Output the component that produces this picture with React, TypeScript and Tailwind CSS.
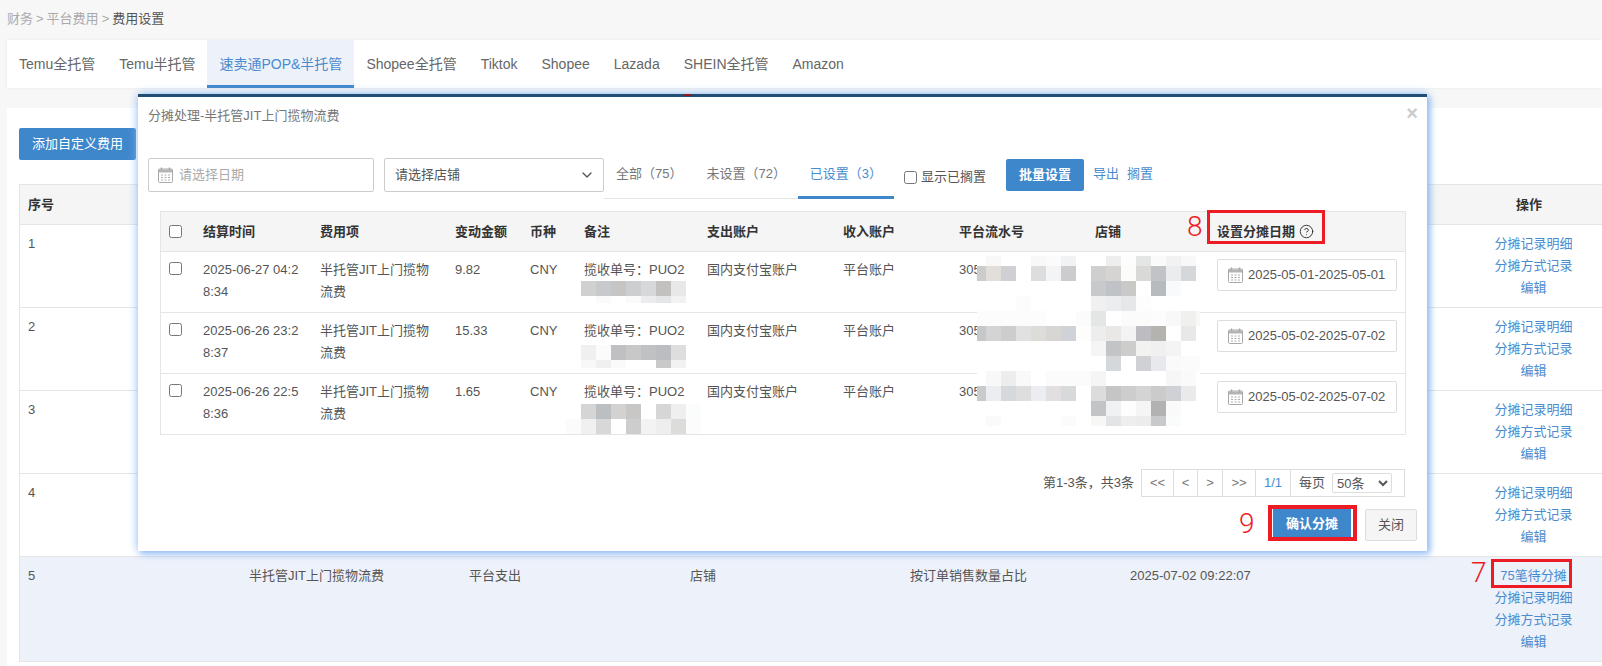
import { ChevronDown, CircleHelp } from "lucide-react";

const w = "#ffffff";
const big: string[][] = [
  [w,"#f8f8f8",w,w,"#f8f8f8","#fbfbfb","#f1f2f4",w,w,"#eeeeee","#fdfdfd","#e4e5e5","#fafafa","#f2f2f2","#f8f8f8",w],
  ["#cccccc","#e2deda","#cfd0d4",w,"#dddddd","#f3f4f6","#ccccce",w,"#cfcfcf","#d5d4d2","#fcfcfa","#d9d9d7","#c2c3c7","#ebecee","#d5d8db","#fdfdfd"],
  [w,w,w,w,w,w,w,w,"#c8c9cb","#bfc2c6","#c9cac8",w,"#b7babe","#f9fafc",w,w],
  [w,w,w,"#fcfcfc",w,w,w,w,"#f0f0f0","#ecedee","#e6e7e9","#fdfdfd",w,w,w,w],
  ["#fcfcfc","#fcfcfc","#fcfcfc","#fcfcfc","#fcfcfc",w,w,"#fbfbfb","#e4e5e5",w,"#fbfbfb","#fbfbfb","#fcfcfc","#f8f8f8","#f0f0ee","#f8f8f8"],
  ["#c6c7c8","#d4d4d4","#cdcecc","#e0e1e0","#dddcd9","#d7d6d4","#cfd2d6","#fdfdfb","#ededed","#e9e8e6","#f3f3f3","#bdbcc1","#b5b3af",w,"#e8e8e8",w],
  [w,w,w,w,w,w,w,w,"#f5f5f5","#c3c4c6","#cdcecc","#f2f2f0","#f0f0f0","#f4f4f4",w,w],
  [w,w,w,w,w,w,w,w,w,"#d5d8da",w,"#d0d1d5","#e8e9ec","#fafafa","#fbfbfb","#fbfbfb"],
  [w,"#f8f8f8","#ededed","#f9f9f9",w,"#fbfbfb","#fbfbfb","#fbfbfb","#f5f5f5",w,w,w,w,"#f6f6f6","#fafafa",w],
  ["#c9caca","#ecedf0","#d5d9db","#dedede","#ecedf0","#e2dfe0","#d8d9db",w,"#dcdcdc","#c5c5c5","#cdcdcd","#d4d4d4","#cbcbcb","#d0d1d6","#eaeaea",w],
  [w,w,w,w,w,w,w,w,"#c3c4c6","#f0f1f3","#fdfdfd","#f5f5f5","#b2b2b2","#fafafa",w,w],
  [w,"#fafafa",w,w,w,w,"#fbfbfb",w,"#f7f7f5","#e3e4e6","#eeeeee","#ececec","#c8c9cb","#fafcfb",w,w],
];
const r1 = ["#d0d0d0","#c8c9cd","#c6c5c3","#cdced0","#d7d8da","#c2c1bf","#e8e8e8", w,"#fafafa",w,"#fafafa","#ececee","#e4e6e8","#f2f2f2"];
const r2 = ["#f0f0f0","#fbfbfb","#c0c0c2","#c8c8c8","#c0c1c3","#bcbdc1","#dededf","#f8f8f8","#f0f0f0","#fafafa",w,w,"#c9c9c9","#f2f2f2"];
const r3 = [w,"#d6d5d5","#bcbfc1","#d2d2d2","#c8c7c5",w,"#d6d6d6","#efefef","#fbfdfc","#fbfbfb","#f0f0f0","#d8d8d8",w,"#cdcdcd","#f3f3f3","#eeeeee","#dcdcda","#fcfcfc"];

const Px = ({ c }: { c: string }) => <div style={{ background: c }} />;

const Calendar = () => (
  <svg width="15" height="16" viewBox="0 0 15 16" fill="none" className="shrink-0">
    <rect x="0.5" y="2" width="14" height="13.5" rx="1" stroke="#a8a8a8" />
    <rect x="1" y="2.5" width="13" height="3" fill="#b5b5b5" />
    <path d="M3.5 0.5V3.5M11.5 0.5V3.5" stroke="#a8a8a8" strokeWidth="1.4" />
    <path d="M3 8h2M6.5 8h2M10 8h2M3 10.5h2M6.5 10.5h2M10 10.5h2M3 13h2M6.5 13h2M10 13h2" stroke="#b0b0b0" />
  </svg>
);

const Links = () => (
  <>
    <div>分摊记录明细</div>
    <div>分摊方式记录</div>
    <div>编辑</div>
  </>
);

const mainCols = "grid grid-cols-[221px_220px_221px_220px_220px_343px_137px]";
const subCols = "grid grid-cols-[34px_117px_135px_75px_54px_123px_136px_116px_136px_122px_197px]";

const tabs = ["Temu全托管", "Temu半托管", "速卖通POP&半托管", "Shopee全托管", "Tiktok", "Shopee", "Lazada", "SHEIN全托管", "Amazon"];

const rows = [
  { t: "2025-06-27 04:28:34", a: "9.82", d: "2025-05-01-2025-05-01" },
  { t: "2025-06-26 23:28:37", a: "15.33", d: "2025-05-02-2025-07-02" },
  { t: "2025-06-26 22:58:36", a: "1.65", d: "2025-05-02-2025-07-02" },
];

const RedNum = ({ n, cls }: { n: string; cls: string }) => (
  <span className={`absolute font-['Roboto',sans-serif] font-light text-[28px] leading-[28px] text-[#ed1c24] ${cls}`}>{n}</span>
);

export default function App() {
  return (
    <div className="relative h-[666px] w-[1602px] overflow-hidden bg-[#f7f7f7] font-['Liberation_Sans','Noto_Sans_CJK_SC',sans-serif] text-[13px] leading-[22px] text-[#555555]">
      <div className="flex h-10 items-center gap-[3px] pb-[2px] pl-[7px] text-[#aaaaaa]">
        <span>财务</span><span>&gt;</span><span>平台费用</span><span>&gt;</span><span className="text-[#555555]">费用设置</span>
      </div>
      <div className="ml-[7px] flex h-12 bg-white text-[14px] leading-[48px] text-[#666666] shadow-[0_0_2px_#e5e5e5]">
        {tabs.map((t) => (
          <div key={t} className={t.startsWith("速") ? "bg-[#edf1f9] px-3 text-[#4a8bd0] shadow-[inset_0_-3px_0_#3f87cb]" : "px-3"}>{t}</div>
        ))}
      </div>
      <div className="ml-[7px] mt-5 h-[558px] bg-white pl-3 pt-5">
        <button className="h-8 rounded-[2px] bg-[#3f87cb] px-[13px] text-white">添加自定义费用</button>
        <div className="mt-6 border-l border-[#e5e5e5]">
          <div className={`${mainCols} h-[41px] items-center border-y border-[#e5e5e5] bg-[#f5f5f5] font-bold text-[#333333]`}>
            <div className="pl-2">序号</div>
            <div /><div /><div /><div /><div />
            <div className="pr-[9px] text-center">操作</div>
          </div>
          {["1", "2", "3", "4"].map((n) => (
            <div key={n} className={`${mainCols} border-b border-[#e5e5e5] py-2`}>
              <div className="pl-2">{n}</div>
              <div /><div /><div /><div /><div />
              <div className="text-center text-[#4a8bd0]"><Links /></div>
            </div>
          ))}
          <div className={`${mainCols} border-b border-[#e5e5e5] bg-[#edf1f9] py-2`}>
            <div className="pl-2">5</div>
            <div className="pl-2">半托管JIT上门揽物流费</div>
            <div className="pl-2">平台支出</div>
            <div className="pl-2">店铺</div>
            <div className="pl-2">按订单销售数量占比</div>
            <div className="pl-2">2025-07-02 09:22:07</div>
            <div className="relative text-center text-[#4a8bd0]">
              <div>75笔待分摊</div>
              <Links />
              <div className="absolute left-[26px] top-[-6px] h-[29px] w-[81px] border-[3px] border-[#ed1c24]" />
              <RedNum n="7" cls="left-[6px] top-[-6px]" />
            </div>
          </div>
        </div>
      </div>

      {/* Modal */}
      <div className="absolute left-[138px] top-[94px] h-[457px] w-[1289px] border-t-[3px] border-[#214d73] bg-white shadow-[0_0_9px_#8ebcf5,3px_3px_6px_rgba(110,165,240,0.6)]">
        <div className="absolute left-[546px] top-[-3px] h-[2px] w-[7px] bg-[#8b1a1a]" />
        <span className="absolute right-[9px] top-[5px] text-[20px] font-bold leading-[22px] text-[#cccccc]">×</span>
        <div className="h-[61px] pl-[10px] pt-2 text-[#777777]">分摊处理-半托管JIT上门揽物流费</div>
        <div className="flex h-[41px] pl-[10px]">
          <div className="flex h-[34px] w-[226px] items-center gap-[6px] rounded-[2px] border border-[#cccccc] pl-[9px] text-[#aaaaaa]">
            <Calendar />
            <span>请选择日期</span>
          </div>
          <div className="ml-[10px] flex h-[34px] w-[220px] items-center justify-between rounded-[2px] border border-[#cccccc] bg-white pl-[10px] pr-[8px] text-[#555555]">
            <span>请选择店铺</span>
            <ChevronDown size={16} strokeWidth={2} color="#555555" />
          </div>
          <div className="flex h-[41px] w-[290px] border-b border-[#e5e5e5] pt-[5px] text-[#777777]">
            <div className="px-3">全部（75）</div>
            <div className="px-3">未设置（72）</div>
            <div className="-mb-px h-[36px] border-b-[3px] border-[#3f87cb] px-3 text-[#4a8bd0]">已设置（3）</div>
          </div>
          <label className="ml-[10px] mt-[8px] flex h-[22px] items-center gap-1 text-[#555555]">
            <input type="checkbox" className="m-0 h-[13px] w-[13px]" />
            <span>显示已搁置</span>
          </label>
          <button className="ml-[20px] mt-px h-8 w-[78px] rounded-[2px] bg-[#3f87cb] font-bold text-white">批量设置</button>
          <div className="ml-[9px] mt-[5px] flex gap-2 text-[#4a8bd0]"><span>导出</span><span>搁置</span></div>
        </div>
        <div className="ml-[22px] mr-[21px] mt-3 border-x border-[#e5e5e5]">
          <div className={`${subCols} h-[41px] items-center border-y border-[#e5e5e5] bg-[#f5f5f5] font-bold text-[#333333]`}>
            <div className="flex pl-2"><input type="checkbox" className="m-0 h-[13px] w-[13px]" /></div>
            {["结算时间", "费用项", "变动金额", "币种", "备注", "支出账户", "收入账户", "平台流水号", "店铺"].map((h) => (
              <div key={h} className="pl-2">{h}</div>
            ))}
            <div className="relative flex items-center gap-[4px] pl-2">
              <span>设置分摊日期</span>
              <CircleHelp size={15} strokeWidth={1.5} color="#333333" />
              <div className="absolute left-[-2px] top-[-11px] h-[34px] w-[118px] border-[3px] border-[#ed1c24]" />
              <RedNum n="8" cls="left-[-22px] top-[-8px]" />
            </div>
          </div>
          <div className="relative">
            {rows.map((r) => (
              <div key={r.t} className={`${subCols} h-[61px] border-b border-[#e5e5e5] pt-[7px]`}>
                <div className="flex pl-2 pt-[3px]"><input type="checkbox" className="m-0 h-[13px] w-[13px]" /></div>
                <div className="break-all px-2">{r.t}</div>
                <div className="px-2">半托管JIT上门揽物流费</div>
                <div className="px-2">{r.a}</div>
                <div className="px-2">CNY</div>
                <div className="whitespace-nowrap pl-2">揽收单号：PUO2</div>
                <div className="px-2">国内支付宝账户</div>
                <div className="px-2">平台账户</div>
                <div className="px-2">305</div>
                <div />
                <div className="pl-2">
                  <div className="flex h-8 w-[180px] items-center gap-[5px] rounded-[2px] border border-[#dddddd] pl-[10px]">
                    <Calendar />
                    <span>{r.d}</span>
                  </div>
                </div>
              </div>
            ))}
            <div className="absolute left-[816px] top-1 grid grid-cols-[9px_repeat(14,15px)_4px] grid-rows-[10px_repeat(10,15px)_10px]">
              {big.flat().map((c, i) => <Px key={i} c={c} />)}
            </div>
            <div className="absolute left-[420px] top-[29px] grid grid-cols-[repeat(7,15px)] grid-rows-[15px_7px]">
              {r1.map((c, i) => <Px key={i} c={c} />)}
            </div>
            <div className="absolute left-[420px] top-[93px] grid grid-cols-[repeat(7,15px)] grid-rows-[15px_8px]">
              {r2.map((c, i) => <Px key={i} c={c} />)}
            </div>
            <div className="absolute left-[405px] top-[152px] grid grid-cols-[repeat(9,15px)] grid-rows-[15px_15px]">
              {r3.map((c, i) => <Px key={i} c={c} />)}
            </div>
          </div>
        </div>
        <div className="mr-[22px] mt-[34px] flex items-center justify-end gap-[7px]">
          <span>第1-3条，共3条</span>
          <div className="flex h-[28px] items-stretch border border-[#dddddd] leading-[26px] text-[#777777]">
            <div className="w-[32px] border-r border-[#dddddd] text-center">&lt;&lt;</div>
            <div className="w-[24px] border-r border-[#dddddd] text-center">&lt;</div>
            <div className="w-[25px] border-r border-[#dddddd] text-center">&gt;</div>
            <div className="w-[33px] border-r border-[#dddddd] text-center">&gt;&gt;</div>
            <div className="w-[35px] border-r border-[#dddddd] text-center text-[#4a8bd0]">1/1</div>
            <div className="flex w-[113px] items-center pl-2 text-[#555555]">
              <span>每页</span>
              <select className="ml-[7px] h-[20px] w-[60px] rounded-[2px] border border-[#dddddd] bg-white text-[#555555]">
                <option>50条</option>
              </select>
            </div>
          </div>
        </div>
        <div className="mr-[10px] mt-[12px] flex items-start justify-end gap-[14px]">
          <div className="relative">
            <button className="block h-[29px] w-[78px] bg-[#3f87cb] font-bold text-white">确认分摊</button>
            <div className="absolute left-[-5px] top-[-4px] h-[36px] w-[89px] border-4 border-[#ed1c24]" />
            <RedNum n="9" cls="left-[-34px] top-[1px]" />
          </div>
          <button className="h-8 w-[52px] rounded-[2px] border border-[#dddddd] bg-[#f5f5f5] text-[#555555]">关闭</button>
        </div>
      </div>
    </div>
  );
}
